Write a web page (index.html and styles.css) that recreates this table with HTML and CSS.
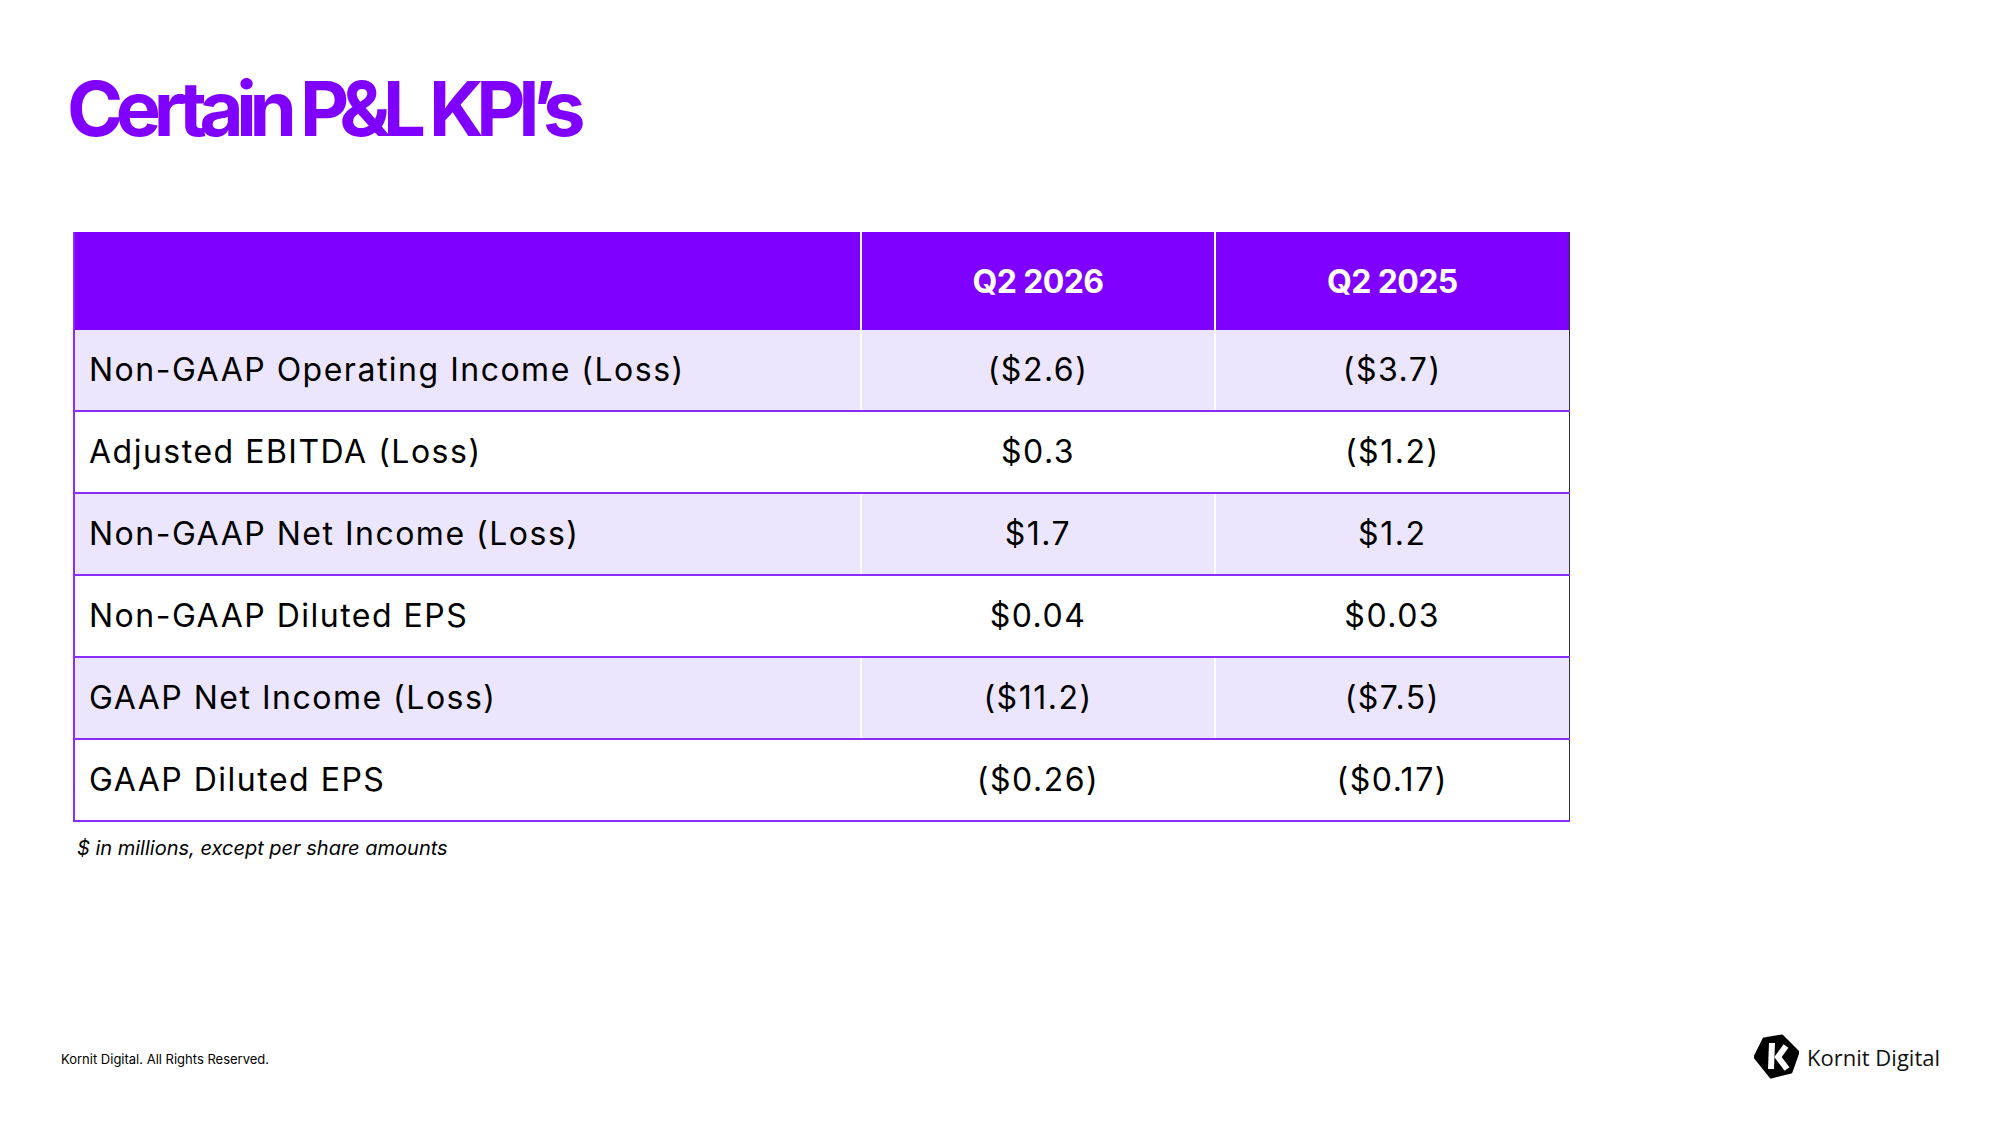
FILE: index.html
```html
<!DOCTYPE html>
<html lang="en">
<head>
<meta charset="utf-8">
<title>Certain P&amp;L KPI's</title>
<link rel="stylesheet" href="styles.css">
</head>
<body>
<div class="slide">
  <h1 class="title">Certain P&amp;L KPI’s</h1>
  <table class="kpi">
    <colgroup>
      <col class="c-label">
      <col class="c-val">
      <col class="c-val">
    </colgroup>
    <thead>
      <tr>
        <th class="label"></th>
        <th>Q2 2026</th>
        <th>Q2 2025</th>
      </tr>
    </thead>
    <tbody>
      <tr class="alt"><td class="label">Non-GAAP Operating Income (Loss)</td><td>($2.6)</td><td>($3.7)</td></tr>
      <tr><td class="label">Adjusted EBITDA (Loss)</td><td>$0.3</td><td>($1.2)</td></tr>
      <tr class="alt"><td class="label">Non-GAAP Net Income (Loss)</td><td>$1.7</td><td>$1.2</td></tr>
      <tr><td class="label">Non-GAAP Diluted EPS</td><td>$0.04</td><td>$0.03</td></tr>
      <tr class="alt"><td class="label">GAAP Net Income (Loss)</td><td>($11.2)</td><td>($7.5)</td></tr>
      <tr><td class="label">GAAP Diluted EPS</td><td>($0.26)</td><td>($0.17)</td></tr>
    </tbody>
  </table>
  <p class="note">$ in millions, except per share amounts</p>
  <div class="spacer"></div>
  <footer class="footer">
    <span class="copy">Kornit Digital. All Rights Reserved.</span>
    <div class="logo">
      <svg class="logo-mark" viewBox="0 0 45 45" width="45" height="45" aria-hidden="true">
        <path d="M1,23 L10,5 L28,2 L44,18 L37,38 L17,43 Z" fill="#000" stroke="#000" stroke-width="3" stroke-linejoin="round"/>
        <path d="M15,9 L21,9 L20,35 L14,35 Z" fill="#fff"/>
        <polyline points="32,12 24,23 33,35" fill="none" stroke="#fff" stroke-width="6" stroke-linejoin="miter"/>
      </svg>
      <span class="logo-text">Kornit Digital</span>
    </div>
  </footer>
</div>
</body>
</html>
```

FILE: styles.css
```css
html, body {
  margin: 0;
  padding: 0;
  background: #ffffff;
}

.slide {
  width: 2000px;
  height: 1125px;
  box-sizing: border-box;
  padding: 66px 60px 46px 61px;
  display: flex;
  flex-direction: column;
  font-family: Inter, "Noto Sans", sans-serif;
  color: #000;
}

.title {
  margin: 0 0 0 6px;
  font-family: Inter, sans-serif;
  font-weight: 700;
  font-size: 76px;
  line-height: 84px;
  letter-spacing: -7.4px;
  color: #8000ff;
}

.kpi {
  margin: 82px 0 0 12px;
  width: 1495px;
  border-collapse: collapse;
  table-layout: fixed;
  border-left: 2px solid #8a2bff;
  border-right: 1px solid #333;
}

.c-label { width: 787px; }
.c-val { width: 354px; }

.kpi th {
  height: 98px;
  padding: 0;
  background: #8000ff;
  color: #fff;
  font-weight: 700;
  font-size: 32px;
  letter-spacing: -0.6px;
  text-align: center;
  border-left: 2px solid #fff;
}

.kpi th.label {
  border-left: none;
}

.kpi td {
  height: 78px;
  padding: 0 0 2px 0;
  font-size: 32px;
  font-weight: 400;
  letter-spacing: 1.5px;
  text-align: center;
  border-bottom: 2px solid #8a2bff;
  border-left: 2px solid #fff;
}

.kpi td.label {
  text-align: left;
  padding-left: 14px;
  border-left: none;
}

.kpi tr.alt td {
  background: #ebe6fd;
}

.note {
  margin: 14px 0 0 16px;
  font-style: italic;
  font-size: 20px;
}

.spacer {
  flex: 1;
}

.footer {
  display: flex;
  align-items: center;
  justify-content: space-between;
}

.copy {
  font-size: 13px;
  margin-top: 4px;
}

.logo {
  display: flex;
  align-items: center;
  gap: 8px;
}

.logo-mark {
  display: block;
}

.logo-text {
  font-family: "Open Sans", "Noto Sans", sans-serif;
  font-size: 22px;
  font-weight: 400;
  color: #111;
}
```
